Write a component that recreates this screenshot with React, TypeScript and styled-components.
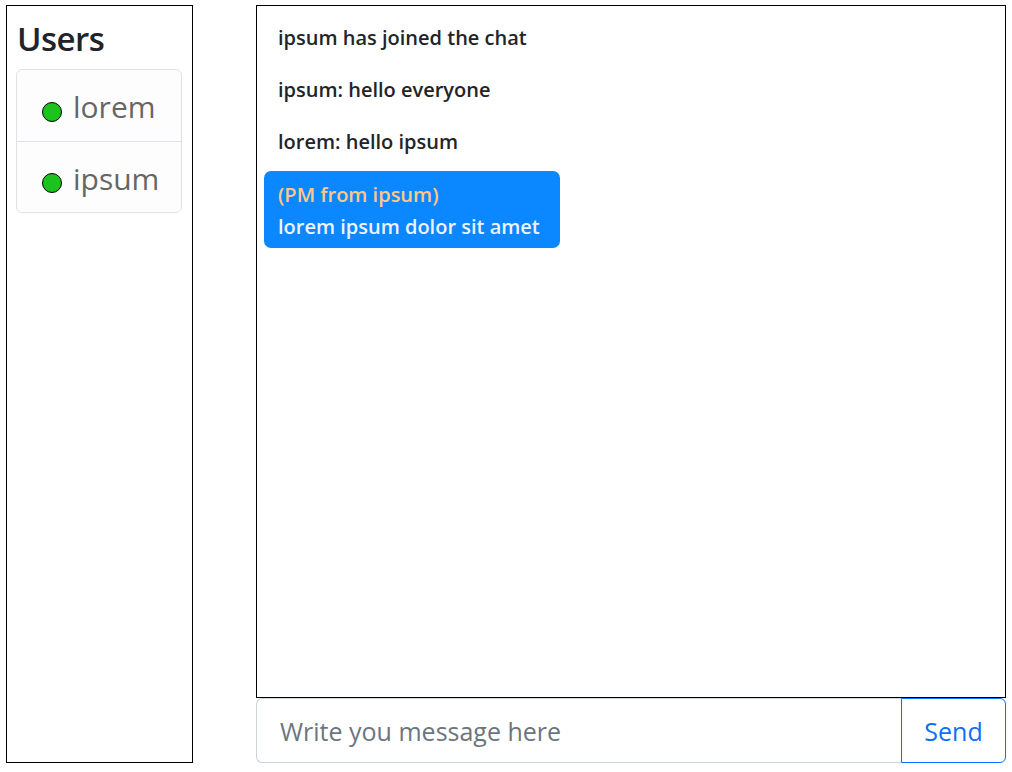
import styled, { createGlobalStyle } from "styled-components";

const GlobalStyle = createGlobalStyle`
  body {
    margin: 0;
    background: #fff;
    font-family: "Open Sans", "Noto Sans", Arial, sans-serif;
    color: #212529;
  }
`;

const Page = styled.div`
  display: flex;
  gap: 63px;
  padding: 5px 6px 9px 6px;
`;

const Sidebar = styled.aside`
  width: 187px;
  height: 758px;
  box-sizing: border-box;
  border: 1px solid #000;
  padding: 13px 10px 0 9px;
`;

const Heading = styled.h2`
  margin: 0 0 10px 1px;
  font-size: 33px;
  font-weight: 600;
  line-height: 1.2;
  letter-spacing: -0.5px;
`;

const UserList = styled.ul`
  list-style: none;
  margin: 0;
  padding: 0;
  border: 1px solid #dee2e6;
  border-radius: 6px;
  background: #fdfdfd;
  overflow: hidden;
`;

const UserItem = styled.li`
  display: flex;
  align-items: center;
  height: 71px;
  box-sizing: border-box;
  padding: 3px 0 0 25px;
  font-size: 30px;
  color: #666;
  & + & {
    border-top: 1px solid #dee2e6;
  }
`;

const Dot = styled.span<{ $online: boolean }>`
  width: 18px;
  height: 18px;
  border-radius: 50%;
  border: 1px solid #000;
  background: ${(p) => (p.$online ? "#1cc31c" : "#bbb")};
  margin: 10px 11px 0 0;
  flex-shrink: 0;
`;

const Main = styled.main`
  display: flex;
  flex-direction: column;
  width: 750px;
`;

const ChatBox = styled.div`
  height: 693px;
  box-sizing: border-box;
  border: 1px solid #000;
  padding: 6px 7px;
  display: flex;
  flex-direction: column;
  align-items: flex-start;
`;

const Message = styled.div`
  padding: 10px 14px;
  font-size: 20px;
  font-weight: 600;
  line-height: 32px;
`;

const PrivateMessage = styled.div`
  margin-top: 3px;
  padding: 8px 20px 5px 14px;
  border-radius: 7px;
  background: #0b87ff;
  color: #eef2ff;
  font-size: 20px;
  font-weight: 600;
  line-height: 32px;
`;

const PmFrom = styled.div`
  color: #ffc888;
`;

const InputGroup = styled.form`
  display: flex;
  height: 65px;
`;

const Input = styled.input`
  flex: 1;
  min-width: 0;
  box-sizing: border-box;
  border: 1px solid #ced4da;
  border-right: none;
  border-radius: 6px 0 0 6px;
  padding: 0 23px;
  font-family: inherit;
  font-size: 25px;
  color: #212529;
  outline: none;
  &::placeholder {
    color: #6c757d;
  }
`;

const SendButton = styled.button`
  width: 105px;
  box-sizing: border-box;
  border: 1px solid #0d6efd;
  border-radius: 0 6px 6px 0;
  background: #fff;
  color: #0d6efd;
  font-family: inherit;
  font-size: 25px;
  cursor: pointer;
`;

const users = [
  { name: "lorem", online: true },
  { name: "ipsum", online: true },
];

const messages = [
  "ipsum has joined the chat",
  "ipsum: hello everyone",
  "lorem: hello ipsum",
];

export default function App() {
  return (
    <>
      <GlobalStyle />
      <Page>
        <Sidebar>
          <Heading>Users</Heading>
          <UserList>
            {users.map((u) => (
              <UserItem key={u.name}>
                <Dot $online={u.online} />
                {u.name}
              </UserItem>
            ))}
          </UserList>
        </Sidebar>
        <Main>
          <ChatBox>
            {messages.map((m, i) => (
              <Message key={i}>{m}</Message>
            ))}
            <PrivateMessage>
              <PmFrom>(PM from ipsum)</PmFrom>
              lorem ipsum dolor sit amet
            </PrivateMessage>
          </ChatBox>
          <InputGroup onSubmit={(e) => e.preventDefault()}>
            <Input placeholder="Write you message here" />
            <SendButton type="submit">Send</SendButton>
          </InputGroup>
        </Main>
      </Page>
    </>
  );
}
